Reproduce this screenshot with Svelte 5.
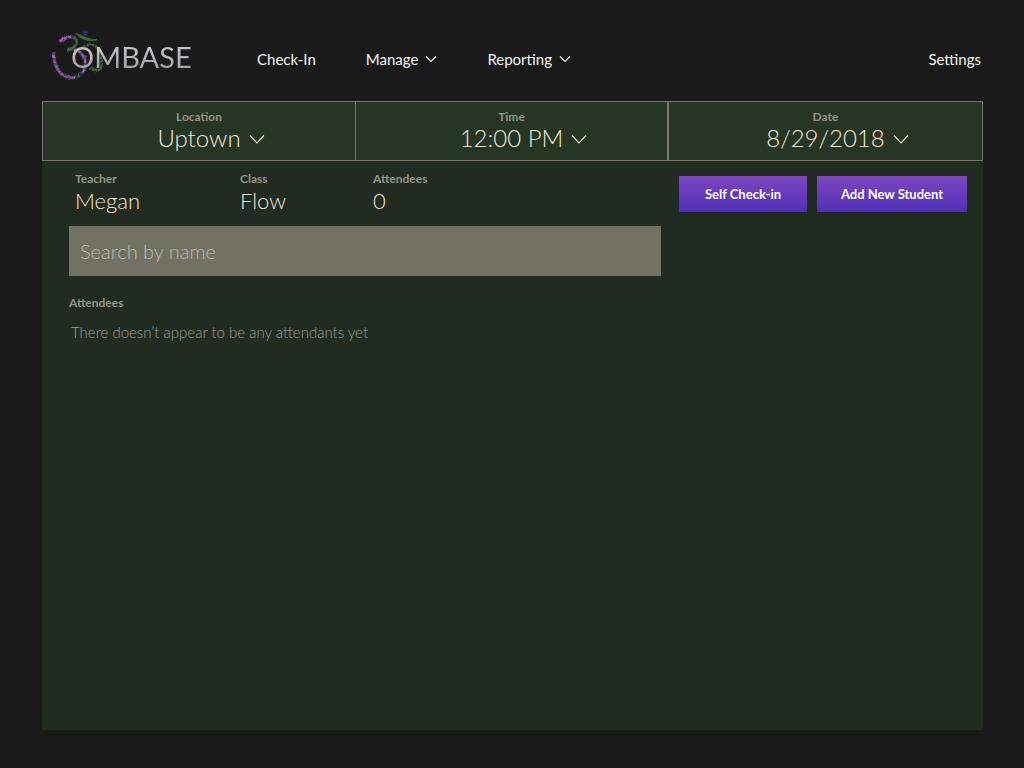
<script>
  const filters = [
    { id: 'location', label: 'Location', value: 'Uptown' },
    { id: 'time', label: 'Time', value: '12:00 PM' },
    { id: 'date', label: 'Date', value: '8/29/2018' }
  ];
  const facts = [
    { label: 'Teacher', value: 'Megan' },
    { label: 'Class', value: 'Flow' },
    { label: 'Attendees', value: '0' }
  ];
  const hook = 'M56 64C70 52 92 44 104 56C114 68 100 86 78 91';
  const bowl = 'M98 90C118 88 134 112 133 132C130 162 108 175 86 172C56 168 38 138 38 96';
  const tail = 'M100 104C120 76 138 78 150 71M154 74C166 74 178 92 181 114C186 140 176 158 160 148L148 144';
  const crescent = 'M104 39C118 56 140 66 168 59C146 58 126 50 104 39Z';
</script>

<header>
  <a class="logo" href="#home">
    <svg viewBox="30 24 162 158" width="54" height="53" aria-hidden="true">
      <filter id="leafy" x="-10%" y="-10%" width="120%" height="120%">
        <feTurbulence type="fractalNoise" baseFrequency="0.1" numOctaves="2" seed="4" />
        <feDisplacementMap in="SourceGraphic" scale="8" xChannelSelector="R" yChannelSelector="G" />
      </filter>
      <g fill="none" filter="url(#leafy)">
        <path d={tail} stroke="#26422a" stroke-width="8" />
        <path d={tail} stroke="#456c39" stroke-width="5" stroke-dasharray="4 5 7 3" />
        <path d={tail} stroke="#72558b" stroke-width="4" stroke-dasharray="5 17 3 24" />
        <path d={hook} stroke="#34313f" stroke-width="11" />
        <path d={hook} stroke="#8965a4" stroke-width="9" stroke-dasharray="13 2 12 2 9 80" />
        <path d={hook} stroke="#456a3a" stroke-width="7" stroke-dasharray="0 44 8 2 13 2 40" />
        <path d={bowl} stroke="#3e2c4d" stroke-width="12" />
        <path d={bowl} stroke="#76558e" stroke-width="8" stroke-dasharray="13 3 9 2 15 3" />
        <path d={bowl} stroke="#a584b2" stroke-width="4" stroke-dasharray="4 9 6 14" />
        <path d={bowl} stroke="#1c2b4e" stroke-width="10" stroke-dasharray="0 91 9 6 8 500" />
        <path d={bowl} stroke="#3f693b" stroke-width="4" stroke-dasharray="0 13 4 25 5 12" />
      </g>
      <path d={crescent} fill="#3d6834" stroke="#3d6834" stroke-width="3" />
      <circle cx="133" cy="38" r="10" fill="#182747" />
      <path d="M126 34l6 5 7-5M128 44l8-1" fill="none" stroke="#2d4a70" stroke-width="3" />
    </svg>
    <span>OMBASE</span>
  </a>
  <nav>
    <a href="#check-in">Check-In</a>
    {#each ['Manage', 'Reporting'] as item}
      <button type="button" aria-haspopup="menu">
        {item}
        <svg width="12" height="8" viewBox="0 0 12 8" aria-hidden="true"><path d="M1 1.5L6 6.5L11 1.5" /></svg>
      </button>
    {/each}
    <a class="settings" href="#settings">Settings</a>
  </nav>
</header>

<main>
  <div class="filters">
    {#each filters as filter}
      <div class="filter">
        <label for={filter.id}>{filter.label}</label>
        <div class="choice">
          <select id={filter.id}><option>{filter.value}</option></select>
          <svg width="16" height="11" viewBox="0 0 16 11" aria-hidden="true"><path d="M1 1.5L8 9L15 1.5" /></svg>
        </div>
      </div>
    {/each}
  </div>

  <div class="content">
    <div class="primary">
      <dl>
        {#each facts as fact}
          <div><dt>{fact.label}</dt><dd>{fact.value}</dd></div>
        {/each}
      </dl>
      <input type="search" placeholder="Search by name" aria-label="Search by name" />
      <h2>Attendees</h2>
      <p>There doesn’t appear to be any attendants yet</p>
    </div>
    <div class="actions">
      <button type="button">Self Check-in</button>
      <button type="button">Add New Student</button>
    </div>
  </div>
</main>

<style>
  :global(body) {
    background: #1a1a1a;
  }
  :global(#app) {
    box-sizing: border-box;
    min-height: 100vh;
    padding: 0 41px 38px 42px;
    display: flex;
    flex-direction: column;
    font-family: "Century Gothic", Lato, sans-serif;
    font-weight: 300;
    color: #f2e8d8;
  }
  a, button, select, input {
    font: inherit;
    color: inherit;
    text-decoration: none;
  }
  button, select {
    cursor: pointer;
    border: 0;
    background: none;
    padding: 0;
  }
  svg {
    flex: none;
  }
  nav path, .choice path {
    fill: none;
    stroke: currentColor;
    stroke-width: 1.1;
  }
  header {
    display: flex;
    align-items: center;
    height: 101px;
    padding-top: 8px;
    box-sizing: border-box;
  }
  .logo {
    display: flex;
    align-items: center;
    margin-left: 9px;
    width: 206px;
  }
  .logo span {
    margin-left: -34px;
    padding-top: 4px;
    font-size: 29px;
    line-height: 32px;
    background: linear-gradient(#d4d4d8, #9c9ca0);
    background-clip: text;
    color: transparent;
    position: relative;
    font-weight: 400;
  }
  nav {
    flex: 1;
    display: flex;
    align-items: center;
    gap: 50px;
    padding: 9px 2px 0 0;
    font-size: 15px;
    line-height: 20px;
    font-weight: 400;
    color: #f4f4f4;
  }
  nav button {
    display: flex;
    align-items: center;
    gap: 7px;
  }
  .settings {
    margin-left: auto;
  }
  main {
    flex: 1;
    background: #222b21;
  }
  .filters {
    display: grid;
    grid-template-columns: repeat(3, 1fr);
    border: 1px solid #77786a;
    background: #263524;
  }
  .filter {
    display: flex;
    flex-direction: column;
    align-items: center;
    height: 58px;
    padding-top: 7px;
    box-sizing: border-box;
  }
  .filter:nth-child(1) {
    border-right: 1px solid #77786a;
  }
  .filter:nth-child(2) {
    border-right: 2px solid #77786a;
  }
  label, dt, h2 {
    margin: 0;
    font-size: 12px;
    line-height: 16px;
    font-weight: 700;
    color: #929484;
  }
  .choice {
    position: relative;
    font-size: 24px;
    line-height: 26px;
  }
  select {
    display: block;
    appearance: none;
    field-sizing: content;
  }
  .choice svg {
    position: absolute;
    left: calc(100% + 8px);
    top: 9px;
  }
  .content {
    display: flex;
    justify-content: space-between;
    padding: 10px 16px 24px 27px;
    gap: 18px;
  }
  .primary {
    flex: 1;
    min-width: 0;
  }
  dl {
    display: grid;
    grid-template-columns: 165px 133px 1fr;
    margin: 0 0 11px;
    padding-left: 6px;
  }
  dd {
    margin: 0;
    font-size: 22px;
    line-height: 28px;
  }
  input {
    display: block;
    box-sizing: border-box;
    width: 100%;
    height: 50px;
    margin: 0;
    padding: 0 11px;
    border: 0;
    border-radius: 0;
    appearance: none;
    background: #727264;
    font-size: 20px;
    outline-offset: 2px;
  }
  input::placeholder {
    color: #b9b9af;
    opacity: 1;
  }
  h2 {
    margin-top: 19px;
  }
  p {
    margin: 11px 2px 0;
    font-size: 15px;
    line-height: 20px;
    color: #9c9f94;
  }
  .actions {
    display: flex;
    align-items: flex-start;
    gap: 10px;
    padding-top: 5px;
  }
  .actions button {
    height: 36px;
    width: 128px;
    font-size: 13px;
    font-weight: 700;
    color: #fff;
    background: linear-gradient(#7d47c0, #4f30b6);
  }
  .actions button + button {
    width: 150px;
  }
</style>
